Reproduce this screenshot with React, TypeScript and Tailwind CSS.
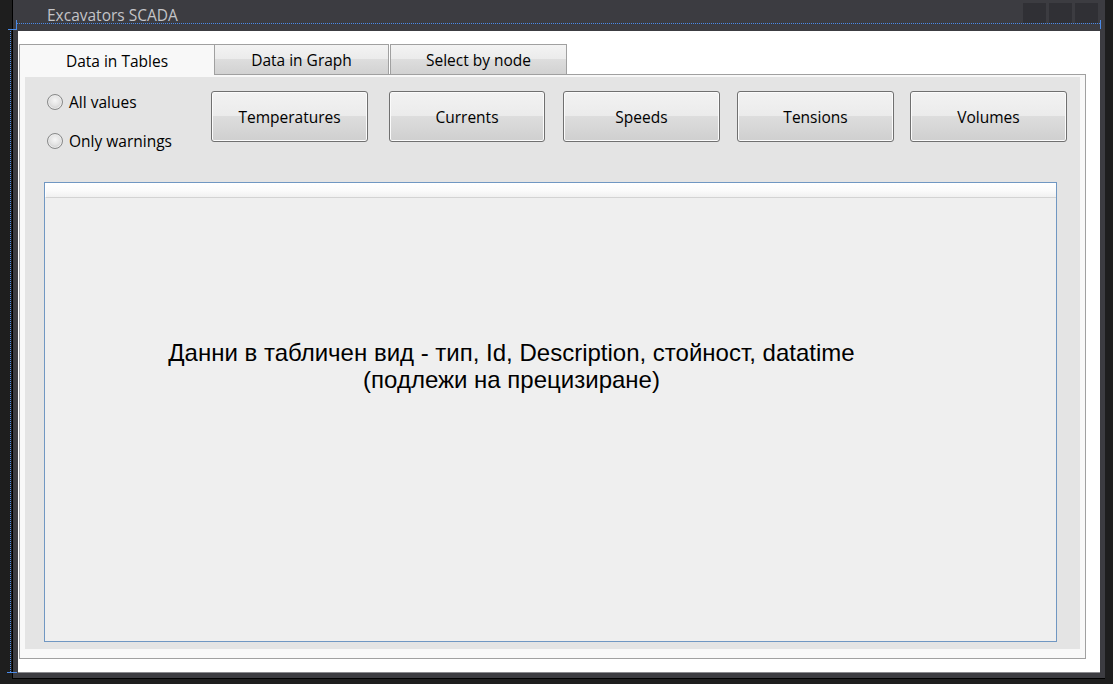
export default function App() {
  const buttons = [
    { label: "Temperatures", cls: "w-[157px]" },
    { label: "Currents", cls: "ml-[21px] w-[156px]" },
    { label: "Speeds", cls: "ml-[18px] w-[157px]" },
    { label: "Tensions", cls: "ml-[17px] w-[157px]" },
    { label: "Volumes", cls: "ml-[16px] w-[157px]" },
  ];
  return (
    <div className="relative w-[1113px] h-[684px] bg-[#1e1e1e] overflow-hidden font-['Open_Sans',sans-serif]">
      {/* window */}
      <div className="ml-[12px] w-[1093px] h-[679px] border-l border-b border-black bg-[#3c3c41] flex flex-col">
        {/* title bar */}
        <div className="h-[31px] shrink-0 flex items-start">
          <div className="pl-[34px] pt-[5px] text-[15.5px] leading-[20px] text-[#c4c4c8]">
            Excavators SCADA
          </div>
          <div className="ml-auto mr-[7px] mt-[3px] flex gap-[3px]">
            <div className="w-[23px] h-[20px] bg-[#303035]" />
            <div className="w-[23px] h-[20px] bg-[#303035]" />
            <div className="w-[23px] h-[20px] bg-[#303035]" />
          </div>
        </div>
        {/* client area */}
        <div className="mx-[5px] h-[642px] shrink-0 bg-white border-b border-[#8a8a8e] pt-[13px] pl-[1px] pr-[14px] pb-[13px] flex flex-col">
          {/* tab headers */}
          <div className="flex items-start h-[30px] shrink-0 relative z-10">
            <div className="w-[196px] h-[31px] bg-[#f8f8f8] border-l border-t border-r border-[#a0a0a0] flex items-center justify-center text-[15.5px] text-black pt-[3px]">
              Data in Tables
            </div>
            <div className="w-[174px] h-[30px] border-t border-r border-[#a0a0a0] bg-[linear-gradient(to_bottom,#f3f3f3_0%,#ebebeb_50%,#dddddd_50%,#d2d2d2_100%)] flex items-center justify-center text-[15.5px] text-black pt-[3px]">
              Data in Graph
            </div>
            <div className="ml-[1px] w-[177px] h-[30px] border-l border-t border-r border-[#a0a0a0] bg-[linear-gradient(to_bottom,#f3f3f3_0%,#ebebeb_50%,#dddddd_50%,#d2d2d2_100%)] flex items-center justify-center text-[15.5px] text-black pt-[3px]">
              Select by node
            </div>
          </div>
          {/* tab panel */}
          <div className="w-[1067px] h-[585px] border border-[#a0a0a0] bg-[#f8f8f8] pt-[2px] px-[5px] pb-[9px]">
            <div className="w-[1055px] h-[572px] bg-[#e4e4e4] flex flex-col">
              {/* top row */}
              <div className="flex items-start pt-[14px] pl-[22px] h-[65px] shrink-0">
                <div className="w-[164px] pt-[1px] flex flex-col gap-[19px]">
                  {["All values", "Only warnings"].map((t) => (
                    <div key={t} className="h-[20px] flex items-center gap-[6px]">
                      <div className="w-[16px] h-[16px] rounded-full border border-[#888989] bg-[radial-gradient(circle_at_50%_40%,#f6f6f6_0%,#e4e4e4_45%,#bdbdbd_100%)] shadow-[inset_0_0_0_1px_#ececec]" />
                      <span className="text-[15.5px] leading-[20px] text-black">{t}</span>
                    </div>
                  ))}
                </div>
                {buttons.map((b) => (
                  <div
                    key={b.label}
                    className={`${b.cls} h-[51px] rounded-[3px] border border-[#707070] bg-[linear-gradient(to_bottom,#f2f2f2_0%,#ebebeb_50%,#dddddd_50%,#cfcfcf_100%)] shadow-[inset_0_0_0_1px_#fbfbfb] flex items-center justify-center text-[15.5px] text-black pt-[3px]`}
                  >
                    {b.label}
                  </div>
                ))}
              </div>
              {/* table */}
              <div className="ml-[19px] mt-[40px] w-[1013px] h-[460px] border border-[#7097c2] bg-[#efefef] flex flex-col">
                <div className="h-[15px] shrink-0 border-b border-[#d3d3d3] bg-[linear-gradient(to_bottom,#ffffff_0%,#fbfbfb_50%,#f1f1f1_100%)] border-l border-l-white" />
                <div className="flex-1 pt-[141px] pr-[78px] text-center font-['Liberation_Sans',Arial,sans-serif] text-[24px] leading-[27px] text-black">
                  <div>Данни в табличен вид - тип, Id, Description, стойност, datatime</div>
                  <div>(подлежи на прецизиране)</div>
                </div>
              </div>
            </div>
          </div>
        </div>
      </div>

      {/* designer selection adorners */}
      <div className="absolute left-[17px] top-[23px] w-[1083px] h-0 border-t border-dotted border-[#4a8ae8]" />
      <div className="absolute left-[10px] top-[29px] w-0 h-[643px] border-l border-dotted border-[#4a8ae8]" />
      <div className="absolute left-[16px] top-[20px] w-[1px] h-[10px] bg-[#4a8ae8]" />
      <div className="absolute left-[8px] top-[29px] w-[9px] h-[1px] bg-[#4a8ae8]" />
      <div className="absolute left-[7px] top-[672px] w-[10px] h-[1px] bg-[#4a8ae8]" />
      <div className="absolute left-[1100px] top-[20px] w-[1px] h-[9px] bg-[#4a8ae8]" />
    </div>
  );
}
